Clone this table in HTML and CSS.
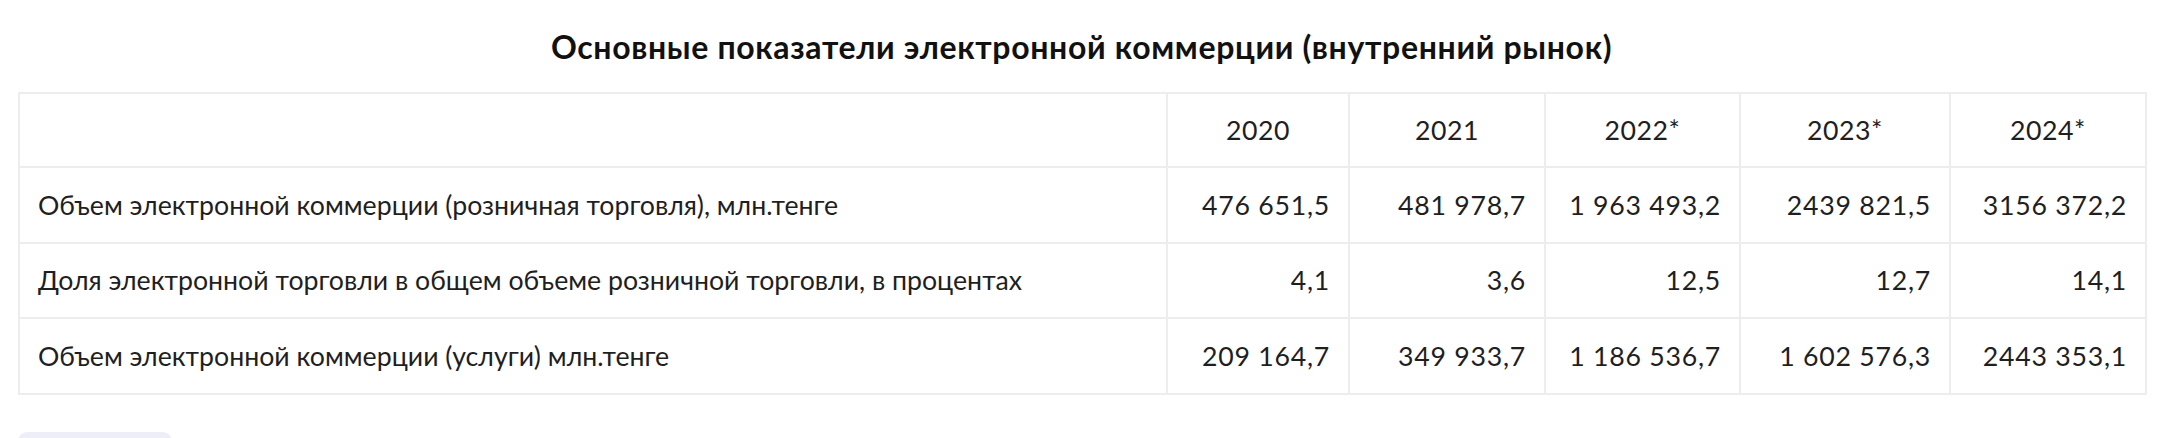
FILE: index.html
```html
<!DOCTYPE html>
<html lang="ru">
<head>
<meta charset="utf-8">
<title>Основные показатели электронной коммерции</title>
<link rel="stylesheet" href="styles.css">
</head>
<body>
<div class="page">
  <h2 class="title">Основные показатели электронной коммерции (внутренний рынок)</h2>
  <table class="stats">
    <colgroup>
      <col class="c-label">
      <col class="c-2020">
      <col class="c-2021">
      <col class="c-2022">
      <col class="c-2023">
      <col class="c-2024">
    </colgroup>
    <thead>
      <tr>
        <th></th>
        <th>2020</th>
        <th>2021</th>
        <th>2022*</th>
        <th>2023*</th>
        <th>2024*</th>
      </tr>
    </thead>
    <tbody>
      <tr>
        <td class="label">Объем электронной коммерции (розничная торговля), млн.тенге</td>
        <td class="num">476 651,5</td>
        <td class="num">481 978,7</td>
        <td class="num">1 963 493,2</td>
        <td class="num">2439 821,5</td>
        <td class="num">3156 372,2</td>
      </tr>
      <tr>
        <td class="label">Доля электронной торговли в общем объеме розничной торговли, в процентах</td>
        <td class="num">4,1</td>
        <td class="num">3,6</td>
        <td class="num">12,5</td>
        <td class="num">12,7</td>
        <td class="num">14,1</td>
      </tr>
      <tr>
        <td class="label">Объем электронной коммерции (услуги) млн.тенге</td>
        <td class="num">209 164,7</td>
        <td class="num">349 933,7</td>
        <td class="num">1 186 536,7</td>
        <td class="num">1 602 576,3</td>
        <td class="num">2443 353,1</td>
      </tr>
    </tbody>
  </table>
  <div class="more-btn"></div>
</div>
</body>
</html>
```
FILE: styles.css
```css
html, body {
  margin: 0;
  padding: 0;
  background: #ffffff;
}

body {
  font-family: "Lato", "Liberation Sans", sans-serif;
  color: #1f1f1f;
}

.page {
  padding: 27px 15px 0 18px;
}

.title {
  margin: 0 0 25px;
  font-size: 32px;
  line-height: 40px;
  font-weight: 700;
  letter-spacing: 0.66px;
  text-align: center;
  color: #111111;
}

.stats {
  width: 100%;
  border-collapse: collapse;
  table-layout: fixed;
  font-size: 26.7px;
}

.c-label { width: 1148px; }
.c-2020 { width: 182px; }
.c-2021 { width: 196px; }
.c-2022 { width: 195px; }
.c-2023 { width: 210px; }
.c-2024 { width: 196px; }

.stats th,
.stats td {
  border: 2px solid #ededed;
  padding: 0 18px;
  vertical-align: middle;
  white-space: nowrap;
}

.stats thead tr {
  height: 74px;
}

.stats tbody tr {
  height: 75.5px;
}

.stats thead th {
  font-weight: 400;
  text-align: center;
  letter-spacing: 0.5px;
}

.label {
  text-align: left;
}

.num {
  text-align: right;
  letter-spacing: 0.75px;
}

.more-btn {
  margin-top: 37px;
  width: 154px;
  height: 40px;
  border-radius: 9px;
  background: #eeeef9;
}
```
